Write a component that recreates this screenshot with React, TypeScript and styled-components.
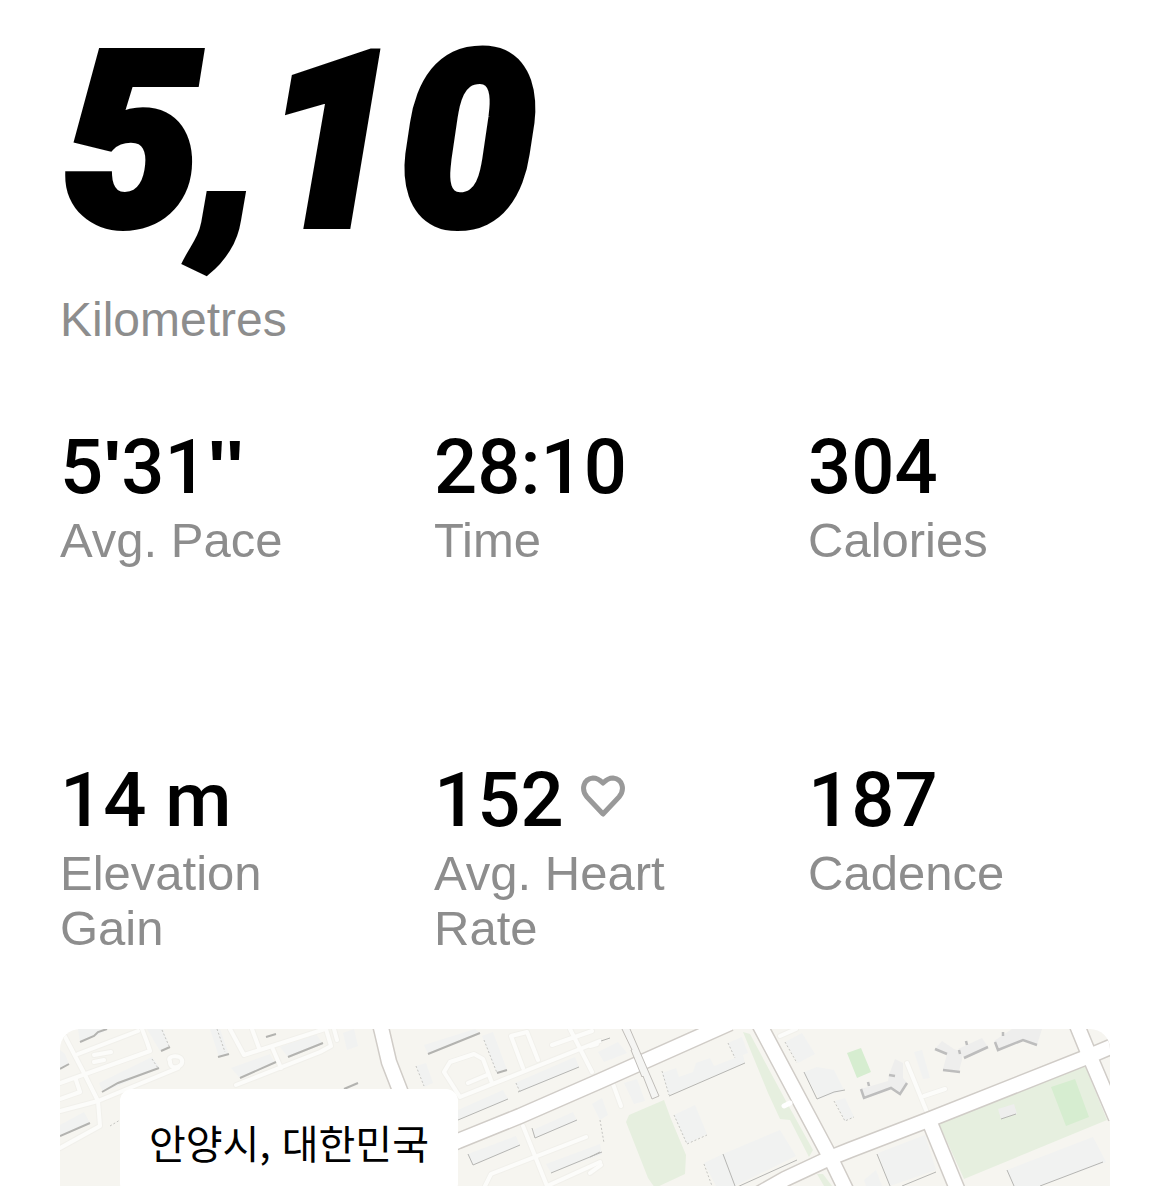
import React from "react";
import styled, { createGlobalStyle } from "styled-components";

const GlobalStyle = createGlobalStyle`
  *, *::before, *::after { box-sizing: border-box; }
  body {
    margin: 0;
    background: #fff;
    color: #000;
    font-family: "Liberation Sans", Arial, Helvetica, sans-serif;
  }
`;

const Page = styled.main`
  display: flex;
  flex-direction: column;
  min-height: 100vh;
  padding: 0 60px;
`;

const Hero = styled.header`
  margin-bottom: 80px;
`;

const Distance = styled.h1`
  margin: 0;
  padding-left: 4px;
  font-family: Roboto, "Open Sans", sans-serif;
  font-size: 242px;
  font-weight: 900;
  font-style: italic;
  line-height: 284px;
  -webkit-text-stroke: 8px #000;
`;

const Unit = styled.p`
  margin: 8px 0 0;
  color: #8d8d8d;
  font-size: 48px;
  line-height: 55px;
`;

const Stats = styled.dl`
  display: grid;
  grid-template-columns: repeat(3, minmax(0, 1fr));
  gap: 137px 72px;
  margin: 0 0 73px;
`;

const Stat = styled.div`
  display: flex;
  flex-direction: column-reverse;
  justify-content: flex-end;
  gap: 6px;
`;

const StatLabel = styled.dt`
  min-height: 110px;
  color: #8d8d8d;
  font-size: 49px;
  line-height: 55px;
`;

const StatValue = styled.dd`
  display: flex;
  align-items: center;
  gap: 16px;
  margin: 0;
  font-family: Roboto, "Liberation Sans", sans-serif;
  font-size: 76px;
  font-weight: 500;
  line-height: 80px;
  white-space: nowrap;
`;

const Prime = styled.span`
  font-family: "Liberation Sans", Arial, sans-serif;
  font-weight: 700;
`;

const HeartIcon = styled.svg`
  width: 46px;
  height: 52px;
  flex: none;
  fill: none;
  stroke: #999;
  stroke-width: 5;
  stroke-linejoin: round;
`;

const MapPanel = styled.section`
  position: relative;
  flex: 1;
  min-height: 157px;
  overflow: hidden;
  border-radius: 20px 20px 0 0;
  background: #f6f5f0;
`;

const MapArt = styled.svg`
  display: block;
  position: absolute;
  inset: 0;
  width: 100%;
  height: 100%;
`;

const Place = styled.p`
  position: absolute;
  top: 60px;
  left: 60px;
  margin: 0;
  padding: 29px;
  border-radius: 12px;
  background: #fff;
  font-family: "Noto Sans CJK KR", sans-serif;
  font-size: 40px;
  line-height: 48px;
  white-space: nowrap;
`;

type StatItem = { value: React.ReactNode; label: string; heart?: boolean };

const stats: StatItem[] = [
  {
    value: <span>5<Prime>'</Prime>31<Prime>''</Prime></span>,
    label: "Avg. Pace",
  },
  { value: "28:10", label: "Time" },
  { value: "304", label: "Calories" },
  { value: "14 m", label: "Elevation Gain" },
  { value: "152", label: "Avg. Heart Rate", heart: true },
  { value: "187", label: "Cadence" },
];

const lanes = [
  "M62 1031 L84 1073 L98 1101 L100 1126 L60 1148",
  "M60 1083 L150 1051 L147 1042 L142 1029 M78 1054 L138 1031",
  "M60 1111 L98 1101 L178 1068",
  "M170 1061 C166 1056 180 1054 182 1060 C184 1068 169 1071 170 1061",
  "M60 1099 L80 1092 L76 1080 M94 1055 L111 1052 M94 1062 L104 1060",
  "M230 1029 L244 1055 L325 1029 M252 1029 L259 1048 M272 1047 L281 1068",
  "M236 1085 L320 1052 L331 1046 L326 1029 M334 1029 L337 1040",
  "M460 1097 L600 1041 M460 1097 L444 1072 L450 1062 L474 1054 L483 1059 L492 1083",
  "M468 1083 L487 1075 M523 1068 L511 1036 L527 1032 L538 1060",
  "M552 1045 L592 1031 M570 1029 L592 1072",
  "M485 1186 L491 1174 L586 1137 M523 1126 L547 1186 M547 1186 L600 1162",
  "M613 1084 L621 1106 M590 1173 L601 1165 M590 1046 L597 1044",
  "M907 1063 L926 1110 M924 1096 L945 1089 M780 1036 L796 1029",
];

const buildings = [
  "M78 1029 L108 1029 L98 1035 L80 1042Z",
  "M99 1083 L152 1057 L160 1068 L103 1092Z",
  "M60 1050 L65 1054 L69 1064 L60 1069Z",
  "M60 1125 L84 1112 L90 1123 L60 1136Z",
  "M147 1029 L163 1029 L170 1047 L160 1051Z",
  "M210 1029 L220 1029 L229 1055 L219 1057Z",
  "M231 1068 L270 1054 L275 1063 L240 1078Z",
  "M280 1047 L316 1034 L323 1044 L288 1057Z",
  "M343 1033 L354 1029 L358 1046 L347 1050Z",
  "M424 1045 L475 1029 L480 1033 L428 1054Z",
  "M482 1036 L493 1032 L507 1070 L497 1073Z",
  "M416 1066 L426 1063 L433 1083 L424 1087Z",
  "M515 1083 L575 1057 L579 1067 L520 1092Z",
  "M458 1110 L503 1090 L508 1099 L458 1120Z",
  "M533 1130 L573 1112 L577 1121 L535 1138Z",
  "M468 1154 L516 1136 L520 1146 L473 1165Z",
  "M546 1164 L600 1144 L602 1154 L551 1173Z",
  "M598 1052 L618 1042 L627 1053 L604 1062Z",
  "M662 1073 L676 1068 L679 1077 L693 1072 L696 1063 L710 1058 L714 1066 L743 1055 L745 1063 L669 1095Z",
  "M728 1043 L742 1037 L748 1053 L735 1058Z",
  "M674 1115 L695 1105 L707 1134 L687 1144Z",
  "M723 1154 L780 1130 L796 1156 L735 1186 L716 1186 L704 1163Z",
  "M785 1042 L802 1033 L815 1054 L798 1063Z",
  "M804 1072 L817 1067 L834 1070 L844 1090 L819 1099Z",
  "M835 1101 L845 1098 L854 1117 L845 1121Z",
  "M592 1104 L602 1098 L608 1115 L600 1120Z",
  "M624 1083 L637 1079 L645 1101 L634 1104Z",
  "M878 1153 L925 1135 L936 1170 L890 1186Z",
  "M1007 1170 L1093 1137 L1106 1162 L1040 1186 L1014 1186Z",
  "M864 1180 L876 1170 L882 1186 L866 1186Z",
  "M914 1052 L922 1050 L930 1078 L923 1079Z",
];

const towers = [
  "M861 1089 L888 1081 L889 1075 L895 1059 L903 1063 L903 1078 L907 1083 L900 1094 L891 1089 L863 1099Z",
  "M935 1049 L942 1041 L954 1049 L962 1052 L962 1060 L959 1071 L943 1069 L947 1054Z",
  "M958 1049 L982 1038 L988 1047 L964 1058Z",
  "M994 1041 L1012 1029 L1042 1029 L1037 1045 L1023 1040 L998 1050Z",
];

const shadows = [
  "M80 1042 L94 1036 L98 1032 L107 1029",
  "M102 1092 L118 1083 L159 1068",
  "M60 1069 L69 1064 M60 1136 L90 1123",
  "M161 1051 L170 1047 M218 1057 L229 1054",
  "M240 1078 L276 1062 M288 1057 L323 1043 M266 1037 L276 1034",
  "M428 1054 L480 1033 M497 1073 L507 1070",
  "M344 1089 L358 1083",
];

const fineLines = [
  "M518 1092 L579 1067 M458 1120 L508 1099 M535 1138 L577 1120",
  "M473 1165 L520 1145 M551 1173 L602 1152 M532 1128 L535 1138 M468 1154 L473 1165",
  "M669 1096 L745 1063 M723 1154 L735 1186 M735 1188 L797 1160",
  "M601 1041 L610 1038 M590 1157 L600 1152 M817 1099 L834 1092 L845 1090",
  "M804 1072 L817 1099 M877 1154 L890 1186 M902 1186 L936 1172",
  "M1007 1170 L1014 1186 M1040 1186 L1103 1162 M1001 1119 L1016 1114",
];

const dottedLines = [
  "M484 1040 L497 1073 M516 1083 L520 1092 M416 1066 L424 1086",
  "M217 1029 L225 1052 M662 1071 L669 1095 M728 1043 L735 1058",
  "M785 1042 L797 1063 M834 1101 L845 1121 L854 1117",
  "M162 1030 L169 1046 M152 1059 L158 1068 M674 1115 L687 1144 L707 1135",
  "M110 1126 L120 1120 M600 1120 L604 1143 M704 1164 L712 1186",
];

const towerEdges = [
  "M861 1089 L864 1098 L891 1088 L900 1094 L907 1083",
  "M889 1075 L895 1076",
  "M935 1049 L947 1054 M943 1070 L960 1072",
  "M964 1058 L988 1047",
  "M995 1042 L998 1050 L1023 1040 L1037 1045",
];

const antennas = "M868 1082 L869 1086 M966 1041 L967 1045 M959 1050 L960 1054 M1003 1032 L1003 1036";

const mainRoads = [
  "M379 1020 L382 1032 L389 1062 L401 1093 L412 1120",
  "M440 1149 L458 1141 L520 1116 L600 1081 L730 1023",
  "M756 1018 L830 1157 L848 1194",
  "M755 1196 L785 1179 L830 1158 L850 1150 L928 1120 L1087 1057 L1120 1043",
  "M1074 1018 L1090 1057 L1116 1118",
  "M928 1118 L960 1196",
];

function CityMap() {
  return (
    <MapArt viewBox="60 1029 1050 157" preserveAspectRatio="xMidYMin slice" aria-hidden="true">
      <g fill="#e6efdf">
        <path d="M626 1122 L629 1115 L664 1100 L671 1119 L676 1131 L686 1155 L685 1174 L655 1188 L648 1178Z" />
        <path d="M743 1032 L750 1034 L787 1103 L813 1150 L809 1157 L790 1120 L780 1119 L768 1093Z" />
        <path d="M939 1124 L1076 1068 L1085 1066 L1107 1120 L964 1179Z" />
        <path d="M817 1174 L823 1174 L832 1186 L824 1186Z" />
      </g>
      <g fill="#d6edd0">
        <path d="M847 1053 L861 1048 L871 1072 L857 1078Z" />
        <path d="M1051 1087 L1075 1079 L1089 1117 L1066 1126Z" />
      </g>
      <g fill="#f1f2f1">
        {buildings.map((d) => <path key={d} d={d} />)}
      </g>
      <g fill="#eeeeed">
        {towers.map((d) => <path key={d} d={d} />)}
        <path d="M998 1109 L1014 1104 L1017 1114 L1001 1119Z" />
      </g>
      <g fill="none" strokeLinecap="round" strokeLinejoin="round">
        <g stroke="#f1f0eb" strokeWidth="6">
          {lanes.map((d) => <path key={d} d={d} />)}
        </g>
        <g stroke="#fcfcfa" strokeWidth="4">
          {lanes.map((d) => <path key={d} d={d} />)}
        </g>
      </g>
      <g fill="none" stroke="#b3b3b0" strokeWidth="2">
        {shadows.map((d) => <path key={d} d={d} />)}
      </g>
      <g fill="none" stroke="#b5b5b2" strokeWidth="1">
        {fineLines.map((d) => <path key={d} d={d} />)}
      </g>
      <g fill="none" stroke="#c4c4c0" strokeWidth="1" strokeDasharray="2 2">
        {dottedLines.map((d) => <path key={d} d={d} />)}
      </g>
      <g fill="none" stroke="#bdbdbd" strokeWidth="2.5">
        {towerEdges.map((d) => <path key={d} d={d} />)}
        <path d={antennas} />
      </g>
      <g fill="none" stroke="#d0ccc7" strokeWidth="17">
        {mainRoads.map((d) => <path key={d} d={d} />)}
      </g>
      <g fill="none" stroke="#fff" strokeWidth="14">
        {mainRoads.map((d) => <path key={d} d={d} />)}
      </g>
      <path d="M784 1106 L790 1103" stroke="#fff" strokeWidth="5" strokeLinecap="round" />
      <path
        d="M622 1029 L632 1050 L631 1050 L642 1077 L643 1076 L652 1099 L659 1096 L643 1059 L630 1029"
        fill="#f5f5f3"
        stroke="#bfbcb8"
        strokeWidth="1"
      />
    </MapArt>
  );
}

export default function App() {
  return (
    <>
      <GlobalStyle />
      <Page>
        <Hero>
          <Distance>5,10</Distance>
          <Unit>Kilometres</Unit>
        </Hero>
        <Stats>
          {stats.map(({ value, label, heart }) => (
            <Stat key={label}>
              <StatLabel>{label}</StatLabel>
              <StatValue>
                {value}
                {heart && (
                  <HeartIcon viewBox="0 0 46 52" aria-hidden="true">
                    <path d="M23 40 L7 23 C1 16 3 5 13 4 C17 4 20 6 23 9 C26 6 29 4 33 4 C43 5 45 16 39 23 Z" />
                  </HeartIcon>
                )}
              </StatValue>
            </Stat>
          ))}
        </Stats>
        <MapPanel aria-label="Run location">
          <CityMap />
          <Place lang="ko">안양시, 대한민국</Place>
        </MapPanel>
      </Page>
    </>
  );
}
